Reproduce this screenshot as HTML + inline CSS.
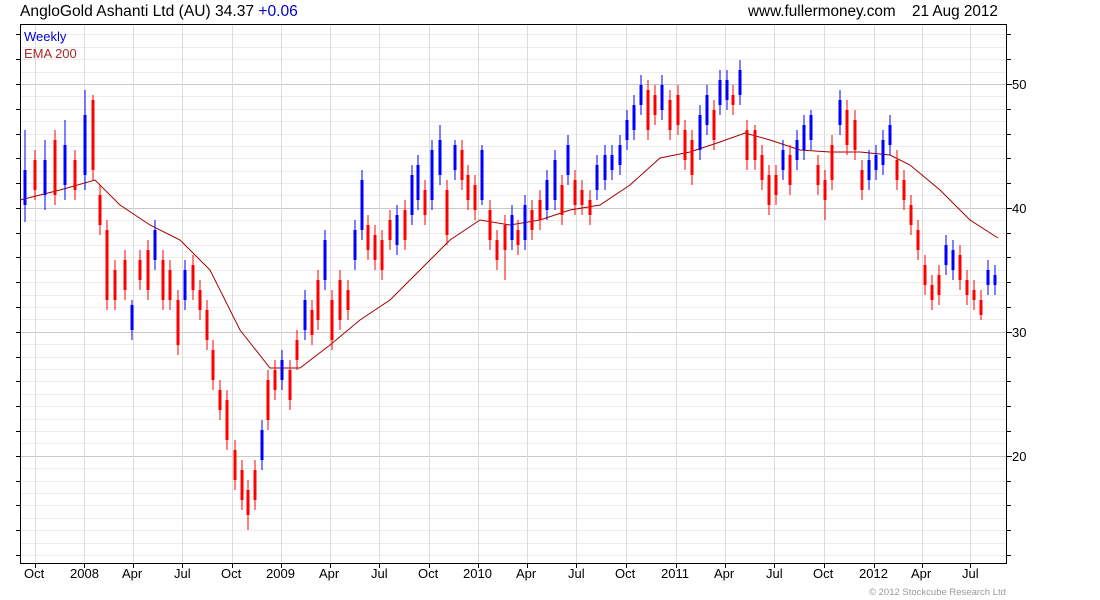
<!DOCTYPE html>
<html><head><meta charset="utf-8"><style>
html,body{margin:0;padding:0;background:#fff;width:1100px;height:600px;overflow:hidden}
svg{display:block;font-family:"Liberation Sans",sans-serif}
</style></head><body>
<svg width="1100" height="600" xmlns="http://www.w3.org/2000/svg">
<text x="20" y="16" font-size="15.6" fill="#000">AngloGold Ashanti Ltd (AU) 34.37 <tspan fill="#0000cc">+0.06</tspan></text>
<text x="748" y="16" font-size="15.3" fill="#000">www.fullermoney.com</text>
<text x="912" y="16" font-size="15.3" fill="#000">21 Aug 2012</text>
<g stroke="#ececec" stroke-width="1">
<path d="M20 34.5H1006M20 59.5H1006M20 109.5H1006M20 121.5H1006M20 134.5H1006M20 146.5H1006M20 158.5H1006M20 171.5H1006M20 183.5H1006M20 195.5H1006M20 220.5H1006M20 233.5H1006M20 245.5H1006M20 257.5H1006M20 270.5H1006M20 282.5H1006M20 295.5H1006M20 307.5H1006M20 319.5H1006M20 344.5H1006M20 357.5H1006M20 369.5H1006M20 381.5H1006M20 394.5H1006M20 406.5H1006M20 419.5H1006M20 431.5H1006M20 443.5H1006M20 468.5H1006M20 481.5H1006M20 493.5H1006M20 505.5H1006M20 518.5H1006M20 530.5H1006M20 543.5H1006M20 555.5H1006M20 47.5H1006M20 72.5H1006M20 96.5H1006"/>
</g>
<g stroke="#c8c8c8" stroke-width="1">
<path d="M20 84.5H1006M20 208.5H1006M20 332.5H1006M20 456.5H1006"/>
<path d="M35.5 25V563M84.5 25V563M133.5 25V563M182.5 25V563M232.5 25V563M281.5 25V563M330.5 25V563M379.5 25V563M429.5 25V563M478.5 25V563M527.5 25V563M576.5 25V563M626.5 25V563M676.5 25V563M725.5 25V563M774.5 25V563M824.5 25V563M874.5 25V563M922.5 25V563M970.5 25V563" stroke="#dcdcdc"/>
</g>
<rect x="20.5" y="24.5" width="986" height="539" fill="none" stroke="#000"/>
<text x="24" y="41" font-size="13" fill="#0000cc">Weekly</text>
<text x="24" y="58" font-size="13" fill="#a52a2a">EMA 200</text>
<g font-size="13" fill="#000">
<text x="1012" y="89">50</text><text x="1012" y="213">40</text><text x="1012" y="337">30</text><text x="1012" y="461">20</text>
<text x="24" y="578">Oct</text><text x="70" y="578">2008</text><text x="122" y="578">Apr</text><text x="174" y="578">Jul</text><text x="221" y="578">Oct</text><text x="266" y="578">2009</text><text x="319" y="578">Apr</text><text x="371" y="578">Jul</text><text x="418" y="578">Oct</text><text x="463" y="578">2010</text><text x="516" y="578">Apr</text><text x="568" y="578">Jul</text><text x="615" y="578">Oct</text><text x="661" y="578">2011</text><text x="714" y="578">Apr</text><text x="766" y="578">Jul</text><text x="813" y="578">Oct</text><text x="859" y="578">2012</text><text x="911" y="578">Apr</text><text x="962" y="578">Jul</text>
</g>
<text x="869" y="595" font-size="9.5" fill="#999">© 2012 Stockcube Research Ltd</text>
<g stroke="#000" stroke-width="1">
<path d="M1006 34.5h5M1006 59.5h5M1006 84.5h6M1006 109.5h5M1006 134.5h5M1006 158.5h5M1006 183.5h5M1006 208.5h6M1006 233.5h5M1006 257.5h5M1006 282.5h5M1006 307.5h5M1006 332.5h6M1006 357.5h5M1006 381.5h5M1006 406.5h5M1006 431.5h5M1006 456.5h6M1006 481.5h5M1006 505.5h5M1006 530.5h5M1006 555.5h5"/>
<path d="M16 34.5h4M16 59.5h4M16 84.5h4M16 109.5h4M16 134.5h4M16 158.5h4M16 183.5h4M16 208.5h4M16 233.5h4M16 257.5h4M16 282.5h4M16 307.5h4M16 332.5h4M16 357.5h4M16 381.5h4M16 406.5h4M16 431.5h4M16 456.5h4M16 481.5h4M16 505.5h4M16 530.5h4M16 555.5h4"/>
<path d="M35.5 563v5M84.5 563v5M133.5 563v5M182.5 563v5M232.5 563v5M281.5 563v5M330.5 563v5M379.5 563v5M429.5 563v5M478.5 563v5M527.5 563v5M576.5 563v5M626.5 563v5M676.5 563v5M725.5 563v5M774.5 563v5M824.5 563v5M874.5 563v5M922.5 563v5M970.5 563v5"/>
</g>
<path fill="none" stroke="#a00000" stroke-width="1" d="M20 200L60 190L95 180L120 205L150 225L180 240L210 270L240 330L270 368L300 368L330 345L360 320L390 300L420 270L450 240L480 220L510 225L540 220L570 210L600 205L630 185L660 158L690 152L720 142L745 133L770 140L800 150L830 152L860 152L890 155L910 165L940 190L970 220L998 238"/>
<g stroke-width="1">
<path stroke="#0000ff" d="M25 130V222M45 140V210M65 120V200M85 90V190M132 300V340M155 220V270M185 260V310M262 420V470M282 350V390M305 290V340M325 230V290M355 220V270M362 170V240M397 205V255M412 165V225M418 155V210M432 140V210M440 125V185M455 140V180M482 145V205M512 205V250M525 195V250M547 170V220M555 150V210M568 135V185M597 155V200M605 145V190M612 145V180M620 135V175M627 110V150M634 95V140M641 75V115M662 75V120M700 105V160M707 85V135M720 70V115M727 70V110M740 60V105M783 140V180M797 130V170M804 115V160M811 110V150M840 90V135M869 150V190M876 145V180M883 130V175M890 115V155M946 235V275M953 240V280M988 260V295M995 265V295"/>
<path stroke="#ff0000" d="M35 150V200M55 130V205M75 150V200M93 95V180M100 185V235M107 220V310M115 260V310M125 250V300M140 250V290M148 240V300M163 250V310M170 260V310M178 290V355M193 255V300M200 280V320M207 300V350M213 340V390M220 380V420M227 390V450M235 440V490M242 460V510M248 480V530M255 460V510M268 370V430M275 360V400M290 360V410M297 330V370M312 300V345M318 270V330M332 290V350M340 270V330M348 280V320M368 215V260M375 225V270M382 230V280M390 210V250M405 200V250M425 180V225M447 180V245M462 140V190M468 165V210M475 175V220M490 200V250M497 230V270M505 215V280M518 220V255M532 200V240M540 190V230M562 175V225M575 170V215M582 180V215M590 190V225M648 80V140M655 85V125M670 90V140M678 85V135M685 120V170M692 130V185M714 100V150M733 85V115M747 120V170M755 125V170M762 145V190M769 165V215M776 165V205M790 145V195M818 155V195M825 170V220M832 135V190M847 100V155M855 110V160M862 160V200M897 150V190M904 170V210M911 195V235M918 220V260M925 255V295M932 275V310M939 265V305M960 245V290M967 270V305M974 280V310M981 290V320"/>
</g>
<g stroke-width="3">
<path stroke="#0000ff" d="M25 170V205M45 160V195M65 145V185M85 115V175M132 305V330M155 230V260M185 270V300M262 430V460M282 360V380M305 300V330M325 240V280M355 230V260M362 180V230M397 215V245M412 175V215M418 165V200M432 150V200M440 140V175M455 145V170M482 150V200M512 215V240M525 205V240M547 180V210M555 160V200M568 145V175M597 165V190M605 155V180M612 155V170M620 145V165M627 120V140M634 105V130M641 85V105M662 85V110M700 115V150M707 95V125M720 80V105M727 80V100M740 70V95M783 150V170M797 140V160M804 125V150M811 115V140M840 100V125M869 160V180M876 155V170M883 140V165M890 125V145M946 245V265M953 250V270M988 270V285M995 275V285"/>
<path stroke="#ff0000" d="M35 160V190M55 140V195M75 160V190M93 100V170M100 195V225M107 230V300M115 270V300M125 260V290M140 260V280M148 250V290M163 260V300M170 270V300M178 300V345M193 265V290M200 290V310M207 310V340M213 350V380M220 390V410M227 400V440M235 450V480M242 470V500M248 490V515M255 470V500M268 380V420M275 370V390M290 370V400M297 340V360M312 310V335M318 280V320M332 300V340M340 280V320M348 290V310M368 225V250M375 235V260M382 240V270M390 220V240M405 210V240M425 190V215M447 190V235M462 150V180M468 175V200M475 185V210M490 210V240M497 240V260M505 225V250M518 230V245M532 210V230M540 200V220M562 185V215M575 180V205M582 190V205M590 200V215M648 90V130M655 95V115M670 100V130M678 95V125M685 130V160M692 140V175M714 110V140M733 95V105M747 130V160M755 130V160M762 155V180M769 175V205M776 175V195M790 155V185M818 165V185M825 180V200M832 145V180M847 110V145M855 120V150M862 170V190M897 160V180M904 180V200M911 205V225M918 230V250M925 265V285M932 285V300M939 275V295M960 255V280M967 280V295M974 290V300M981 300V315"/>
</g>
</svg>
</body></html>
